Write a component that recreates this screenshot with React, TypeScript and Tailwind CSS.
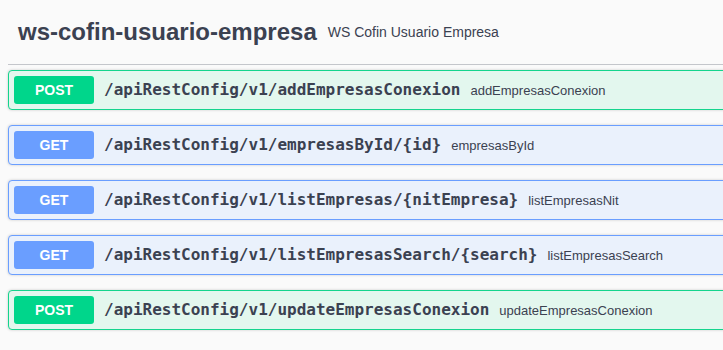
import React from "react";

type Op = { method: "POST" | "GET"; path: string; summary: string };

const ops: Op[] = [
  { method: "POST", path: "/apiRestConfig/v1/addEmpresasConexion", summary: "addEmpresasConexion" },
  { method: "GET", path: "/apiRestConfig/v1/empresasById/{id}", summary: "empresasById" },
  { method: "GET", path: "/apiRestConfig/v1/listEmpresas/{nitEmpresa}", summary: "listEmpresasNit" },
  { method: "GET", path: "/apiRestConfig/v1/listEmpresasSearch/{search}", summary: "listEmpresasSearch" },
  { method: "POST", path: "/apiRestConfig/v1/updateEmpresasConexion", summary: "updateEmpresasConexion" },
];

function OpBlock({ op }: { op: Op }) {
  const post = op.method === "POST";
  return (
    <div
      className={
        post
          ? "mb-[15px] mr-[-30px] flex h-[40px] items-center rounded-[4px] border border-[#14d48d] bg-[#e3f7ee] px-[5px] shadow-[0_0_3px_rgba(0,0,0,0.19)]"
          : "mb-[15px] mr-[-30px] flex h-[40px] items-center rounded-[4px] border border-[#6a9eff] bg-[#eaf1fc] px-[5px] shadow-[0_0_3px_rgba(0,0,0,0.19)]"
      }
    >
      <div
        className={
          post
            ? "flex h-[28px] w-[80px] shrink-0 items-center justify-center rounded-[3px] bg-[#00d68b] text-[14px] font-bold text-white"
            : "flex h-[28px] w-[80px] shrink-0 items-center justify-center rounded-[3px] bg-[#6a9eff] text-[14px] font-bold text-white"
        }
        style={{ fontFamily: '"Liberation Sans", Arial, sans-serif' }}
      >
        {op.method}
      </div>
      <span
        className="whitespace-nowrap px-[10px] text-[16px] font-bold text-[#3b4151]"
        style={{ fontFamily: '"DejaVu Sans Mono", monospace' }}
      >
        {op.path}
      </span>
      <span
        className="whitespace-nowrap pt-[1px] text-[13px] text-[#3b4151]"
        style={{ fontFamily: '"Liberation Sans", Arial, sans-serif' }}
      >
        {op.summary}
      </span>
    </div>
  );
}

export default function App() {
  return (
    <div
      className="h-[350px] w-[723px] overflow-hidden bg-[#fafafa]"
      style={{ fontFamily: '"Liberation Sans", Arial, sans-serif' }}
    >
      <div className="pl-[8px]">
        <div className="mb-[5px] mr-[-30px] flex h-[65px] items-center border-b border-[#c4c6cb] pl-[10px]">
          <h3 className="whitespace-nowrap text-[24px] font-bold text-[#3b4151]">ws-cofin-usuario-empresa</h3>
          <span className="whitespace-nowrap pl-[11px] text-[14px] text-[#3b4151]">WS Cofin Usuario Empresa</span>
        </div>
        {ops.map((op) => (
          <OpBlock key={op.path} op={op} />
        ))}
      </div>
    </div>
  );
}
